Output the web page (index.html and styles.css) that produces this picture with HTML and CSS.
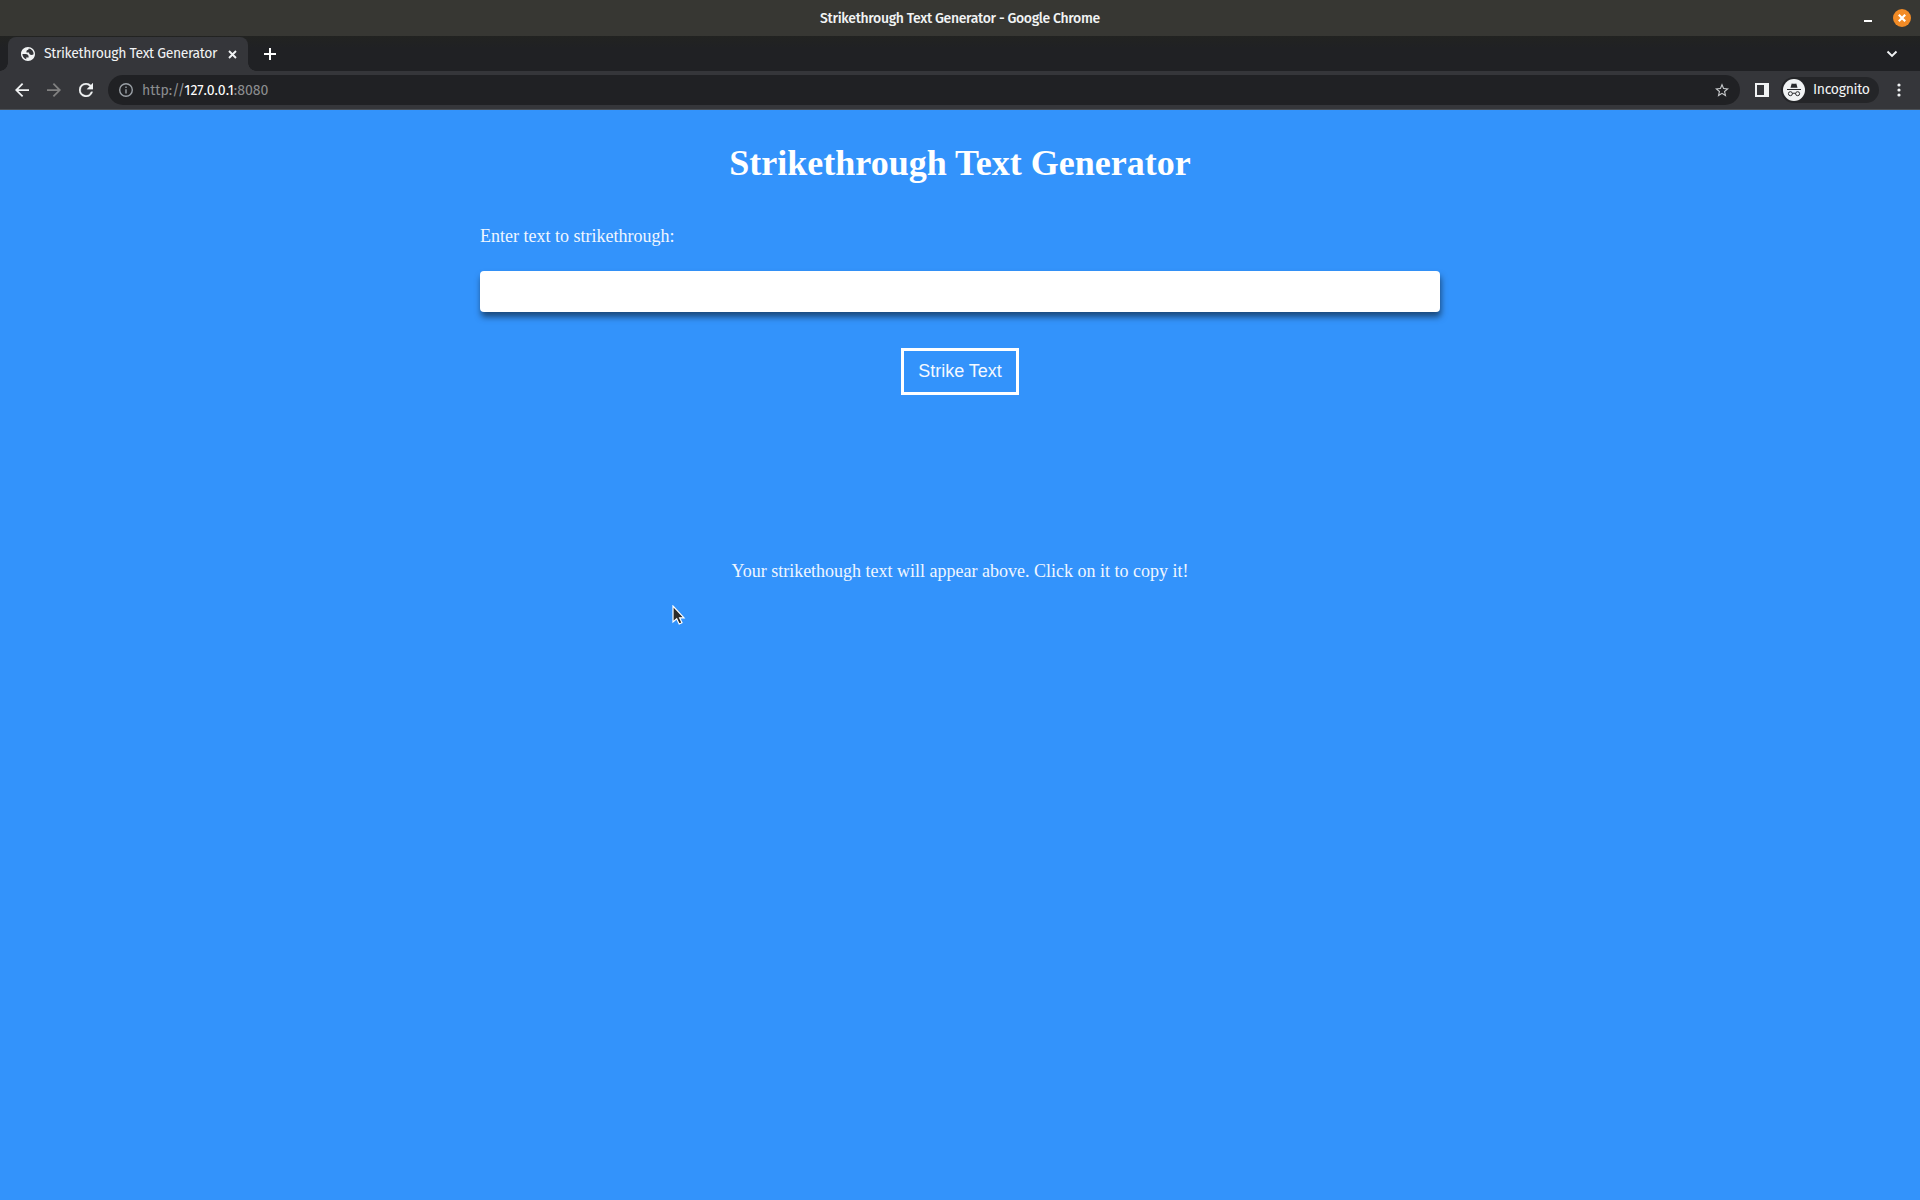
FILE: index.html
```html
<!DOCTYPE html>
<html lang="en">
<head>
<meta charset="utf-8">
<title>Strikethrough Text Generator</title>
<link rel="stylesheet" href="styles.css">
</head>
<body>
<header class="titlebar">
  <span class="window-title">Strikethrough Text Generator - Google Chrome</span>
  <div class="window-controls">
    <span class="minimize"></span>
    <span class="close"><svg width="8" height="8" viewBox="0 0 8 8"><path d="M.8.8l6.4 6.4M7.2.8L.8 7.2" stroke="#fff" stroke-width="2.2"/></svg></span>
  </div>
</header>
<nav class="tabs">
  <div class="tab">
    <svg width="14" height="14" viewBox="2 2 20 20"><path fill="#f1f3f4" d="M12 2C6.480 2 2 6.480 2 12s4.480 10 10 10 10-4.480 10-10S17.520 2 12 2zM4 12h4.400c3.410.020 4.900 1.730 4.470 5.150H9.500v2.470C6.340 18.560 4 15.530 4 12zm15.990.190c-.750.670-1.680 1.080-3 1.080-2.330 0-3.500-1.110-3.500-3.330h-3.700c-.270-2.610.620-3.910 2.680-3.910 0-.950.300-1.530.760-1.870C16.950 4.650 20.090 7.960 19.990 12.190z"/></svg>
    <span class="tab-title">Strikethrough Text Generator</span>
    <svg class="tab-close" width="9" height="9" viewBox="0 0 9 9"><path d="M1 1l7 7M8 1L1 8" stroke="#f1f3f4" stroke-width="1.900"/></svg>
  </div>
  <svg class="new-tab" width="12" height="12" viewBox="0 0 12 12"><path d="M6 0v12M0 6h12" stroke="#fff" stroke-width="2"/></svg>
  <svg class="tab-search" width="12" height="8" viewBox="0 0 12 8"><path d="M1.500 1.500L6 6l4.500-4.500" fill="none" stroke="#f1f3f4" stroke-width="1.900"/></svg>
</nav>
<div class="toolbar">
  <svg width="14" height="14" viewBox="4 4 16 16"><path fill="#f1f3f4" d="M20 11H7.830l5.590-5.590L12 4l-8 8 8 8 1.410-1.410L7.830 13H20z"/></svg>
  <svg class="forward" width="14" height="14" viewBox="4 4 16 16"><path fill="#818181" d="M12 4l-1.410 1.410L16.170 11H4v2h12.170l-5.580 5.590L12 20l8-8z"/></svg>
  <svg class="reload" width="14" height="14" viewBox="4 4 16 16"><path fill="#f1f3f4" stroke="#f1f3f4" stroke-width=".3" d="M17.650 6.350A7.960 7.960 0 0 0 12 4a8 8 0 1 0 7.730 10h-2.080A6 6 0 1 1 12 6c1.660 0 3.140.690 4.220 1.780L13 11h7V4z"/></svg>
  <div class="address">
    <svg width="14" height="14" viewBox="2 2 20 20"><path fill="#9aa0a6" d="M11 17h2v-6h-2zm1-15a10 10 0 1 0 0 20 10 10 0 0 0 0-20zm0 18a8 8 0 1 1 0-16 8 8 0 0 1 0 16zM11 9h2V7h-2z"/></svg>
    <span class="url">http://<b>127.0.0.1</b>:8080</span>
    <svg class="star" width="14" height="14" viewBox="2 2 20 19"><path fill="#c4c7c9" d="M22 9.240l-7.190-.620L12 2 9.190 8.630 2 9.240l5.460 4.730L5.820 21 12 17.270 18.180 21l-1.630-7.030zM12 15.400l-3.760 2.270 1-4.280-3.320-2.880 4.380-.380L12 6.100l1.710 4.040 4.380.380-3.320 2.880 1 4.280z"/></svg>
  </div>
  <svg class="panel" width="14" height="14" viewBox="0 0 14 14"><path d="M0 0h14v14H0zM2 2v10h7V2z" fill="#f1f3f4" fill-rule="evenodd"/></svg>
  <div class="incognito">
    <svg width="22" height="22" viewBox="0 0 22 22"><circle cx="11" cy="11" r="11" fill="#f1f3f4"/><path d="M4 10h14v1H4zM7.500 8.700L8.700 4.400q2.300.8 4.600 0l1.200 4.300z" fill="#292a2d"/><g fill="none" stroke="#292a2d" stroke-width="1"><circle cx="7.400" cy="14.700" r="2"/><circle cx="14.600" cy="14.700" r="2"/><path d="M9.400 14.500q1.600-.8 3.200 0"/></g></svg>
    <span>Incognito</span>
  </div>
  <svg class="menu" width="4" height="14" viewBox="0 0 4 14"><g fill="#f1f3f4"><circle cx="2" cy="2" r="1.600"/><circle cx="2" cy="7" r="1.600"/><circle cx="2" cy="12" r="1.600"/></g></svg>
</div>
<main class="page">
  <h1 class="heading">Strikethrough Text Generator</h1>
  <form class="form">
    <label class="label" for="text">Enter text to strikethrough:</label>
    <input class="field" id="text" type="text">
    <button class="strike" type="button">Strike Text</button>
  </form>
  <p class="hint">Your strikethough text will appear above. Click on it to copy it!</p>
  <svg class="cursor" width="14" height="21" viewBox="0 0 14 21"><path d="M1 1v16l3.700-3.200L7.200 19l2.800-1.300-2.400-4.900H12z" fill="#2b2b2b" stroke="#fff" stroke-width="1.200"/></svg>
</main>
</body>
</html>
```
FILE: styles.css
```css
* { box-sizing: border-box; }
body {
  margin: 0;
  height: 1200px;
  display: flex;
  flex-direction: column;
  overflow: hidden;
  background: #3393fb;
  color: #f1f3f4;
  font-family: "Fira Sans", "Noto Sans", sans-serif;
  font-size: 14px;
}
svg { display: block; flex: none; }
.titlebar {
  height: 36px;
  flex: none;
  display: grid;
  grid-template-columns: 1fr auto 1fr;
  align-items: center;
  background: #373733;
}
.window-title {
  grid-column: 2;
  font-weight: 500;
  letter-spacing: -0.34px;
  white-space: nowrap;
}
.window-controls {
  justify-self: end;
  display: flex;
  align-items: center;
  gap: 21px;
  padding-right: 9px;
}
.minimize { width: 8px; height: 2px; margin-top: 6px; background: #fff; }
.close {
  width: 18px;
  height: 18px;
  border-radius: 50%;
  display: grid;
  place-items: center;
  background: #f28b26;
}
.tabs {
  height: 35px;
  flex: none;
  display: flex;
  align-items: center;
  padding: 1px 18px 0 8px;
  background: linear-gradient(#222321, #202124 12px);
}
.tab {
  position: relative;
  width: 240px;
  height: 34px;
  display: flex;
  align-items: center;
  padding: 0 11px 0 13px;
  border-radius: 8px 8px 0 0;
  background: #35363a;
}
.tab::before, .tab::after {
  content: "";
  position: absolute;
  bottom: 0;
  width: 8px;
  height: 8px;
}
.tab::before { left: -8px; background: radial-gradient(circle at 0 0, transparent 7.5px, #35363a 8px); }
.tab::after { right: -8px; background: radial-gradient(circle at 100% 0, transparent 7.5px, #35363a 8px); }
.tab-title { margin-left: 9px; padding-bottom: 1px; letter-spacing: -0.36px; white-space: nowrap; }
.tab-close { margin-left: auto; }
.new-tab { margin-left: 16px; }
.tab-search { margin-left: auto; margin-right: 4px; }
.toolbar {
  height: 39px;
  flex: none;
  display: flex;
  align-items: center;
  padding: 0 19px 0 15px;
  border-bottom: 1px solid #4c5157;
  background: #35363a;
}
.forward { margin-left: 18px; }
.reload { margin-left: 18px; }
.address {
  flex: 1;
  height: 30px;
  margin-left: 15px;
  display: flex;
  align-items: center;
  padding: 0 11px;
  border-radius: 15px;
  background: #202124;
}
.url { margin-left: 9px; color: #8c8e90; font-size: 14.1px; }
.url b { color: #fff; font-weight: 400; }
.star { margin-left: auto; }
.panel { margin-left: 15px; }
.incognito {
  width: 98px;
  height: 26px;
  margin-left: 12px;
  display: flex;
  align-items: center;
  gap: 8px;
  padding-left: 2px;
  border-radius: 13px;
  background: #242528;
}
.incognito span { padding-bottom: 1px; letter-spacing: -0.3px; }
.menu { margin-left: 18px; }
.page {
  position: relative;
  flex: 1;
  display: flex;
  flex-direction: column;
  align-items: center;
  color: #fff;
  font: 18px/21px "Liberation Serif", serif;
}
.heading { margin: 32px 0 0; font-size: 36px; line-height: 42px; }
.form { width: 960px; margin-top: 42px; display: flex; flex-direction: column; }
.label { color: #eff6ff; }
.field {
  height: 41px;
  margin-top: 24px;
  border: 0;
  border-radius: 4px;
  background: #fff;
  box-shadow: 1px 5px 6px rgb(0 0 0 / 50%);
}
.strike {
  align-self: center;
  width: 118px;
  height: 47px;
  margin-top: 36px;
  padding: 0;
  border: 3px solid #fff;
  background: transparent;
  color: #f4f9ff;
  font: 18px "Liberation Sans", sans-serif;
}
.hint { margin: 166px 0 0; color: #eff6ff; }
.cursor { position: absolute; left: 672px; top: 495px; }
```
